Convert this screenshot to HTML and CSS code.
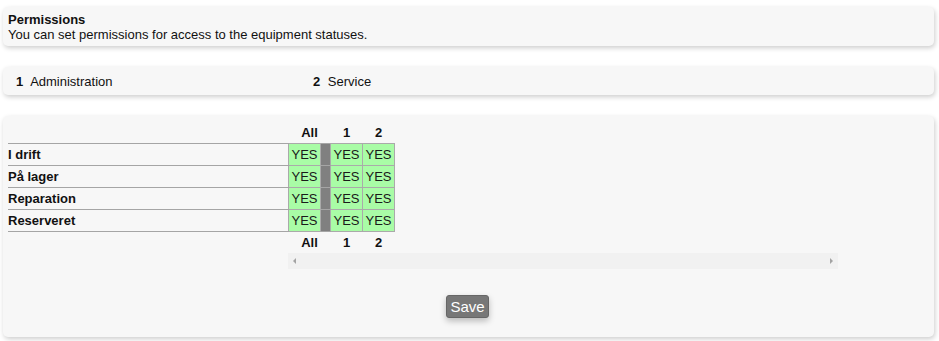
FILE: index.html
```html
<!DOCTYPE html>
<html lang="en">
<head>
  <meta charset="UTF-8">
  <title>Permissions</title>
  <link rel="stylesheet" href="styles.css">
</head>
<body>

  <div class="panel intro">
    <div class="intro-title">Permissions</div>
    <div>You can set permissions for access to the equipment statuses.</div>
  </div>

  <div class="panel groups">
    <div class="group"><b>1</b> Administration</div>
    <div class="group"><b>2</b> Service</div>
  </div>

  <div class="panel matrix">
    <table class="perm-table">
      <thead>
        <tr>
          <th class="label"></th>
          <th class="col" colspan="2">All</th>
          <th class="col">1</th>
          <th class="col">2</th>
        </tr>
      </thead>
      <tbody id="perm-rows">
        <!-- rows filled in by script -->
      </tbody>
      <tfoot>
        <tr>
          <th class="label"></th>
          <th class="col" colspan="2">All</th>
          <th class="col">1</th>
          <th class="col">2</th>
        </tr>
      </tfoot>
    </table>
    <div class="scroll-track">
      <span class="arrow arrow-left"></span>
      <span class="arrow arrow-right"></span>
    </div>
    <div class="actions">
      <button class="save-btn">Save</button>
    </div>
  </div>

  <script>
    // status names for the matrix
    const statuses = ['I drift', 'På lager', 'Reparation', 'Reserveret'];
    const body = document.getElementById('perm-rows');

    statuses.forEach(name => {
      const row = document.createElement('tr');
      row.innerHTML = `
        <td class="label">${name}</td>
        <td class="yes">YES</td>
        <td class="sep"></td>
        <td class="yes">YES</td>
        <td class="yes">YES</td>
      `;
      body.appendChild(row);
    });
  </script>

</body>
</html>
```

FILE: styles.css
```css
body {
  font-family: "Liberation Sans", Arial, sans-serif;
  font-size: 13px;
  color: #111;
  margin: 0;
  padding: 7px 5px 4px 3px;
  background-color: white;
}
.panel {
  background-color: #f7f7f7;
  border-radius: 5px;
  box-shadow: 1px 2px 5px rgba(0, 0, 0, 0.2);
  margin-bottom: 21px;
}
.intro {
  padding: 5px 5px 4px 5px;
  line-height: 15px;
  height: 30px;
}
.intro-title {
  font-weight: bold;
}
.groups {
  display: flex;
  height: 27px;
  padding-top: 1px;
  align-items: center;
  padding-left: 13px;
}
.group {
  width: 297px;
}
.group b {
  margin-right: 4px;
}
.matrix {
  padding: 6px 5px 0 5px;
  height: 215px;
  margin-bottom: 0;
}
.perm-table {
  border-collapse: collapse;
}
.perm-table th, .perm-table td {
  height: 21px;
  padding: 0;
}
.perm-table th {
  font-weight: bold;
  text-align: center;
}
.perm-table .label {
  width: 280px;
  text-align: left;
  font-weight: bold;
}
.perm-table tbody td {
  border-top: 1px solid #a5a5a5;
  border-bottom: 1px solid #a5a5a5;
}
.perm-table .col {
  width: 31px;
}
.perm-table .yes {
  background-color: #a9fca6;
  border: 1px solid #aaa;
  text-align: center;
  width: 31px;
  color: #1a1a1a;
}
.perm-table .sep {
  width: 9px;
  background-color: #808080;
  border-left: 1px solid #aaa;
  border-right: 1px solid #aaa;
}
.scroll-track {
  margin-left: 280px;
  width: 550px;
  height: 16px;
  background-color: #f1f1f1;
  position: relative;
}
.arrow {
  position: absolute;
  top: 5px;
  width: 0;
  height: 0;
  border-top: 3px solid transparent;
  border-bottom: 3px solid transparent;
}
.arrow-left {
  left: 5px;
  border-right: 3px solid #a3a3a3;
}
.arrow-right {
  right: 5px;
  border-left: 3px solid #a3a3a3;
}
.actions {
  text-align: center;
  margin-top: 26px;
  padding-right: 2px;
}
.save-btn {
  font-family: "Liberation Sans", Arial, sans-serif;
  font-size: 15px;
  background-color: #777;
  color: white;
  border: 1px solid #666;
  border-radius: 3px;
  padding: 2px 3px;
  box-shadow: 0 3px 6px rgba(0, 0, 0, 0.25);
  cursor: pointer;
}
```
